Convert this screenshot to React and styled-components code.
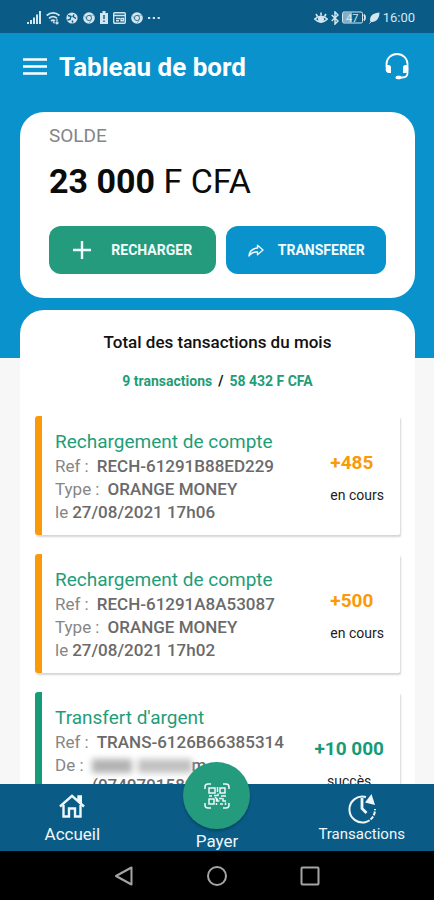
import React from "react";
import styled, { createGlobalStyle } from "styled-components";

const color = {
  navy: "#0a5c87",
  blue: "#0992cc",
  green: "#259b7e",
  greenText: "#1f9d78",
  orange: "#fa9a08",
  grey: "#6a6a6a",
};

const GlobalStyle = createGlobalStyle`
  * { box-sizing: border-box; }
  body {
    margin: 0;
    background: #f7f7f7;
    font-family: Roboto, "Liberation Sans", sans-serif;
    color: #111;
  }
  button { font-family: inherit; border: 0; padding: 0; cursor: pointer; }
  h1, h2, h3, p, ul { margin: 0; padding: 0; }
`;

const Screen = styled.div`
  display: flex;
  flex-direction: column;
  height: 100vh;
  overflow: hidden;
`;

const StatusBar = styled.div`
  display: flex;
  justify-content: space-between;
  align-items: center;
  flex: none;
  height: 33px;
  padding: 2px 19px 0 27px;
  background: ${color.navy};
  color: #d3e6f0;
`;

const StatusGroup = styled.div`
  display: flex;
  align-items: center;
  gap: ${(p) => p.$gap}px;
  font-size: 13px;
  line-height: 16px;
`;

const Content = styled.main`
  flex: 1;
  min-height: 0;
  overflow: hidden;
  background: #f7f7f7;
`;

const Hero = styled.section`
  background: ${color.blue};
  padding: 0 19px 60px 20px;
`;

const AppHeader = styled.header`
  display: flex;
  align-items: center;
  gap: 10px;
  height: 79px;
  padding: 0 4px 12px 0;
`;

const IconButton = styled.button`
  display: flex;
  align-items: center;
  justify-content: center;
  width: 29px;
  height: 32px;
  background: none;
  color: #fff;
`;

const PageTitle = styled.h1`
  flex: 1;
  color: #fff;
  font-size: 26px;
  line-height: 32px;
  font-weight: 700;
`;

const BalanceCard = styled.section`
  background: #fff;
  border-radius: 24px;
  padding: 12px 29px 24px;
`;

const BalanceLabel = styled.h2`
  color: #858585;
  font-size: 19px;
  line-height: 24px;
  font-weight: 400;
`;

const Balance = styled.p`
  margin: 13px 0 24px;
  font-size: 34px;
  line-height: 41px;
  font-weight: 400;
  color: #0b0b0b;
`;

const Actions = styled.div`
  display: grid;
  grid-template-columns: 21fr 20fr;
  gap: 10px;
`;

const ActionButton = styled.button`
  display: flex;
  align-items: center;
  justify-content: center;
  gap: ${(p) => p.$gap}px;
  height: 48px;
  border-radius: 12px;
  background: ${(p) => p.$bg};
  color: #f2fbfa;
  font-size: 14px;
  font-weight: 700;
`;

const Panel = styled.section`
  margin: -48px 19px 0 20px;
  padding: 22px 15px;
  background: #fff;
  border-radius: 24px 24px 0 0;
`;

const PanelTitle = styled.h2`
  font-size: 17px;
  line-height: 20px;
  font-weight: 500;
  text-align: center;
`;

const Summary = styled.p`
  display: flex;
  justify-content: center;
  gap: 6px;
  margin: 19px 0 25px;
  font-size: 14px;
  line-height: 20px;
  font-weight: 700;
`;

const SummaryValue = styled.span`
  color: ${color.greenText};
`;

const TransactionList = styled.ul`
  display: flex;
  flex-direction: column;
  gap: 19px;
  list-style: none;
`;

const Transaction = styled.li`
  display: flex;
  justify-content: space-between;
  align-items: center;
  padding: 13px 16px 11px 13px;
  border-left: 7px solid ${(p) => p.$accent};
  border-radius: 3px 2px 2px 3px;
  background: #fff;
  box-shadow: 1px 2px 2px rgba(0, 0, 0, 0.17);
`;

const TransactionTitle = styled.h3`
  color: ${color.greenText};
  font-size: 19px;
  line-height: 26px;
  font-weight: 400;
`;

const Detail = styled.p`
  display: flex;
  align-items: center;
  gap: ${(p) => p.$gap || 8}px;
  color: #868686;
  font-size: 17px;
  line-height: 23px;
  white-space: nowrap;
`;

const DetailValue = styled.strong`
  color: ${color.grey};
  font-weight: 500;
`;

const Phone = styled.p`
  padding: 0 0 4px 37px;
  color: ${color.grey};
  font-size: 17px;
  line-height: 16px;
  font-weight: 500;
`;

const HiddenName = styled.span`
  display: inline-flex;
  gap: 6px;
  margin-right: -8px;
  filter: blur(3px);

  &::before, &::after {
    content: "";
    height: 14px;
    background: #b3b3b3;
  }
  &::before { width: 40px; }
  &::after { width: 54px; background: #c2c2c2; }
`;

const AmountColumn = styled.div`
  display: flex;
  flex-direction: column;
  align-items: ${(p) => (p.$centered ? "center" : "flex-start")};
  gap: 10px;
  padding-top: 4px;
`;

const Amount = styled.strong`
  color: ${(p) => p.$accent};
  font-size: 19px;
  line-height: 23px;
`;

const State = styled.span`
  font-size: 14px;
  line-height: 23px;
  color: #222;
`;

const TabBar = styled.nav`
  display: grid;
  grid-template-columns: repeat(3, 1fr);
  grid-template-rows: 67px;
  flex: none;
  position: relative;
  background: ${color.navy};
`;

const Tab = styled.button`
  display: flex;
  flex-direction: column;
  align-items: center;
  justify-content: flex-end;
  gap: ${(p) => p.$gap || 0}px;
  padding-bottom: ${(p) => (p.$raised ? 0 : 7)}px;
  background: none;
  color: #f0f7fa;
  font-size: ${(p) => p.$size}px;
  line-height: 20px;
`;

const PayCircle = styled.span`
  display: flex;
  align-items: center;
  justify-content: center;
  width: 67px;
  height: 67px;
  margin-top: -23px;
  border-radius: 50%;
  background: ${color.green};
  box-shadow: 0 2px 3px rgba(0, 0, 0, 0.25);
`;

const SystemBar = styled.nav`
  display: grid;
  grid-template-columns: repeat(3, 1fr);
  flex: none;
  height: 49px;
  padding: 0 18%;
  background: #000;
`;

const SystemButton = styled.button`
  display: flex;
  align-items: center;
  justify-content: center;
  background: none;
  color: #a5a5a5;
`;

const Icon = ({ w, h = w, box = `0 0 ${w} ${h}`, stroke = 2, children }) => (
  <svg
    width={w}
    height={h}
    viewBox={box}
    fill="none"
    stroke="currentColor"
    strokeWidth={stroke}
    strokeLinecap="butt"
    aria-hidden="true"
  >
    {children}
  </svg>
);

const SignalIcon = () => (
  <Icon w={14} h={13} stroke={2}>
    <path d="M1 13v-2M4 13V9M7 13V6.500M10 13V3.500M13 13V0" />
  </Icon>
);

const WifiIcon = () => (
  <Icon w={15} h={14} stroke={1.7}>
    <path d="M.7 4.500Q7 -.8 13.500 4.500M3 7.300Q7 4 11 7.300M5 10Q7 8.300 9 10" />
    <path d="M7 10.500l1.500 1.800M11 8v5M9.500 11.500l1.500 1.500 1.500-1.500" strokeWidth="1.2" />
  </Icon>
);

const BallIcon = () => (
  <Icon w={12}>
    <circle cx="6" cy="6" r="5.600" fill="currentColor" stroke="none" />
    <path d="M2 3.500l3 1-1 3-2.500.5M8 2.500L7 4.500l3 2M6 8.500l1 2" stroke={color.navy} strokeWidth="1.400" />
  </Icon>
);

const ChromeIcon = () => (
  <Icon w={12}>
    <circle cx="6" cy="6" r="5.800" fill="currentColor" stroke="none" />
    <circle cx="6" cy="6" r="2.600" stroke={color.navy} strokeWidth=".8" />
    <path d="M6 3.300h4.800M3.600 7.300L1.500 3.600M8.300 7.500L6.100 11.300" stroke={color.navy} strokeWidth=".4" />
  </Icon>
);

const BatteryAlertIcon = () => (
  <Icon w={8} h={13}>
    <path d="M0 2h2.500V0h3v2H8v11H0z" fill="currentColor" stroke="none" />
    <path d="M4 4v4M4 9.500V11" stroke={color.navy} strokeWidth="1.400" />
  </Icon>
);

const NewsIcon = () => (
  <Icon w={13} h={12} stroke={1.4}>
    <rect x=".7" y=".7" width="11.600" height="10.600" rx="1" />
    <path d="M1 3.500h11M3 6.500h4M3 8.700h3M8 6.500h2.500v2.200H8z" />
  </Icon>
);

const MoreIcon = () => (
  <Icon w={12} h={4}>
    <path d="M0 2h2.200M4.800 2H7M9.600 2h2.200" />
  </Icon>
);

const EyeIcon = () => (
  <Icon w={14} h={12} stroke={1.6}>
    <path d="M.7 7Q7 1.500 13.300 7 7 13.500.7 7z" />
    <circle cx="7" cy="7.300" r="2.300" fill="currentColor" />
    <path d="M7 3.500V.5M3.500 4.500L2 2M10.500 4.500L12 2" />
  </Icon>
);

const BluetoothIcon = () => (
  <Icon w={8} h={14} stroke={1.5}>
    <path d="M.7 4l6.300 6-3 3V1l3 3-6.300 6" />
  </Icon>
);

const BatteryIcon = () => (
  <Icon w={24} h={13} stroke={1}>
    <rect x=".5" y="1" width="20" height="11" rx="1.500" />
    <rect x="1" y="1.500" width="9" height="10" fill="currentColor" stroke="none" opacity=".6" />
    <path d="M22 3.500q2 3 0 6" strokeWidth="1.800" />
    <text x="4" y="10.500" fontSize="11" fill="currentColor" stroke="none">47</text>
  </Icon>
);

const LeafIcon = () => (
  <Icon w={11} h={12} stroke={1}>
    <path d="M10.500.5C5 1 1 3 1 8q0 1 .7 1.800C6 11 10.500 7 10.500.5z" fill="currentColor" stroke="none" />
    <path d="M.5 11.500L5 6.500" />
  </Icon>
);

const MenuIcon = () => (
  <Icon w={24} h={17} stroke={2.4}>
    <path d="M0 1.500h24M0 8.500h24M0 15.500h24" />
  </Icon>
);

const HeadsetIcon = () => (
  <Icon w={24} h={27} stroke={1.8}>
    <path d="M1.500 14v-3a10.500 10 0 0 1 21 0v9q0 4.500-5 4.500h-3" />
    <path d="M1 12h2.500q2.500 0 2.500 2.500V20H4q-3.300-.3-3.300-3.500zM23 12h-2.500q-2.500 0-2.500 2.500V20h2q3.300-.3 3.300-3.500z" fill="currentColor" stroke="none" />
    <rect x="10.500" y="22.800" width="6" height="3.400" rx="1.700" fill="currentColor" stroke="none" />
  </Icon>
);

const PlusIcon = () => (
  <Icon w={18} stroke={2.4}>
    <path d="M9 0v18M0 9h18" />
  </Icon>
);

const ShareIcon = () => (
  <Icon w={16} h={13} stroke={1.4}>
    <path d="M9.500 1.200L15 6l-5.500 4.700V8Q4 7.500 1 12 1.500 5 9.500 4z" strokeLinejoin="round" />
  </Icon>
);

const HomeIcon = () => (
  <Icon w={26} h={24} stroke={2.4}>
    <path d="M1 12.500L13 1.800l12 10.700M19.500 7.500V2.500h2.300v7" />
    <path d="M4.500 11v11.500h5.500v-8h6v8h5.500V11" />
  </Icon>
);

const HistoryIcon = () => (
  <Icon w={30} stroke={2}>
    <path d="M19 3A13 13 0 1 0 19 28" />
    <path d="M19 28A13 13 0 0 0 28 15" strokeDasharray="4 1.200" />
    <path d="M18 8.500L24.500 0l3.500 11z" fill="currentColor" stroke="none" />
    <path d="M15 4v10.500l4.500 4.500" strokeWidth="2.800" />
  </Icon>
);

const QrIcon = () => (
  <Icon w={26} stroke={1.5}>
    <path d="M1 6V4q0-3 3-3h3M19 1h3q3 0 3 3v2M25 20v2q0 3-3 3h-3M7 25H4q-3 0-3-3v-2" />
    <path d="M5 5h6v5H5zM16 5h5v5h-5zM5 16h5v5H5z" />
    <path d="M13.500 4v5M10 12.500h4v-2M5 13h3M17 13h5M12.500 15v3h3M19 15v3h3M16 21h3M21.500 19.500v2.500M12.500 20v2M15 15.500h3M11 14l3 3" />
  </Icon>
);

const transactions = [
  {
    title: "Rechargement de compte",
    reference: "RECH-61291B88ED229",
    type: "ORANGE MONEY",
    date: "27/08/2021 17h06",
    amount: "+485",
    state: "en cours",
    accent: color.orange,
  },
  {
    title: "Rechargement de compte",
    reference: "RECH-61291A8A53087",
    type: "ORANGE MONEY",
    date: "27/08/2021 17h02",
    amount: "+500",
    state: "en cours",
    accent: color.orange,
  },
  {
    title: "Transfert d'argent",
    reference: "TRANS-6126B66385314",
    phone: "(0740791580",
    amount: "+10 000",
    state: "succès",
    accent: "#159b78",
    done: true,
  },
];

function TransactionRow({ item }) {
  return (
    <Transaction $accent={item.accent}>
      <div>
        <TransactionTitle>{item.title}</TransactionTitle>
        <Detail>Ref : <DetailValue>{item.reference}</DetailValue></Detail>
        {item.type && <Detail>Type : <DetailValue>{item.type}</DetailValue></Detail>}
        {item.date && <Detail $gap={4}>le <DetailValue>{item.date}</DetailValue></Detail>}
        {item.phone && (
          <>
            <Detail>De : <HiddenName /><DetailValue>m</DetailValue></Detail>
            <Phone>{item.phone}</Phone>
            <Detail aria-hidden="true">&nbsp;</Detail>
          </>
        )}
      </div>
      <AmountColumn $centered={item.done}>
        <Amount $accent={item.accent}>{item.amount}</Amount>
        <State>{item.state}</State>
      </AmountColumn>
    </Transaction>
  );
}

export default function App() {
  return (
    <Screen>
      <GlobalStyle />
      <StatusBar>
        <StatusGroup $gap={5}>
          <SignalIcon />
          <WifiIcon />
          <BallIcon />
          <ChromeIcon />
          <BatteryAlertIcon />
          <NewsIcon />
          <ChromeIcon />
          <MoreIcon />
        </StatusGroup>
        <StatusGroup $gap={3}>
          <EyeIcon />
          <BluetoothIcon />
          <BatteryIcon />
          <LeafIcon />
          <span>16:00</span>
        </StatusGroup>
      </StatusBar>

      <Content>
        <Hero>
          <AppHeader>
            <IconButton aria-label="Menu"><MenuIcon /></IconButton>
            <PageTitle>Tableau de bord</PageTitle>
            <IconButton aria-label="Assistance"><HeadsetIcon /></IconButton>
          </AppHeader>
          <BalanceCard>
            <BalanceLabel>SOLDE</BalanceLabel>
            <Balance><b>23 000</b> F CFA</Balance>
            <Actions>
              <ActionButton $bg={color.green} $gap={20}><PlusIcon />RECHARGER</ActionButton>
              <ActionButton $bg={color.blue} $gap={14}><ShareIcon />TRANSFERER</ActionButton>
            </Actions>
          </BalanceCard>
        </Hero>

        <Panel>
          <PanelTitle>Total des tansactions du mois</PanelTitle>
          <Summary>
            <SummaryValue>9 transactions</SummaryValue>
            <span>/</span>
            <SummaryValue>58 432 F CFA</SummaryValue>
          </Summary>
          <TransactionList>
            {transactions.map((item) => (
              <TransactionRow key={item.reference} item={item} />
            ))}
          </TransactionList>
        </Panel>
      </Content>

      <TabBar>
        <Tab $size={17} $gap={6}><HomeIcon />Accueil</Tab>
        <Tab $size={17} $raised $gap={2}>
          <PayCircle><QrIcon /></PayCircle>
          Payer
        </Tab>
        <Tab $size={15}><HistoryIcon />Transactions</Tab>
      </TabBar>

      <SystemBar>
        <SystemButton aria-label="Retour">
          <Icon w={20}><path d="M17.500 1.500v17L2 10z" strokeLinejoin="round" /></Icon>
        </SystemButton>
        <SystemButton aria-label="Écran d'accueil">
          <Icon w={20}><circle cx="10" cy="10" r="9" /></Icon>
        </SystemButton>
        <SystemButton aria-label="Applications récentes">
          <Icon w={20}><rect x="1.500" y="1.500" width="17" height="17" rx="1" /></Icon>
        </SystemButton>
      </SystemBar>
    </Screen>
  );
}
